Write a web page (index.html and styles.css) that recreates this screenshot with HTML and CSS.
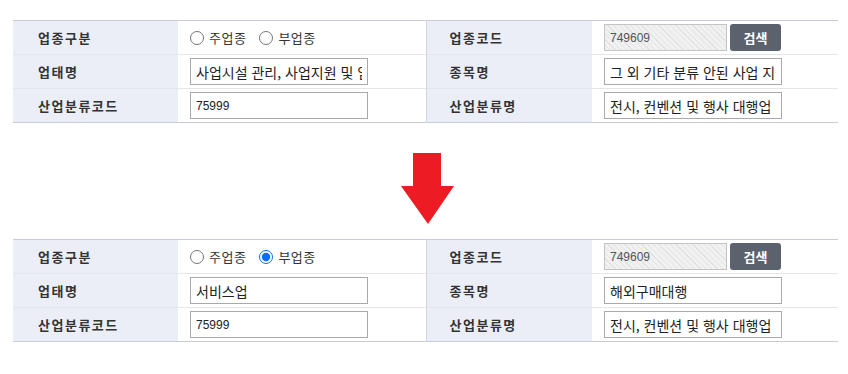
FILE: index.html
```html
<!DOCTYPE html>
<html lang="ko">
<head>
    <meta charset="UTF-8">
    <title>업종 선택</title>
    <link rel="stylesheet" href="styles.css">
</head>
<body>
    <div class="wrap">
        <table class="form-table">
            <colgroup>
                <col class="c-th"><col class="c-td"><col class="c-th2"><col class="c-td2">
            </colgroup>
            <tr>
                <th>업종구분</th>
                <td>
                    <label class="radio"><input type="radio" name="type1"> 주업종</label>
                    <label class="radio"><input type="radio" name="type1"> 부업종</label>
                </td>
                <th class="th-right">업종코드</th>
                <td>
                    <input type="text" class="inp inp-code" value="749609" readonly>
                    <button type="button" class="btn-search">검색</button>
                </td>
            </tr>
            <tr>
                <th>업태명</th>
                <td><input type="text" class="inp" value="사업시설 관리, 사업지원 및 임대 서비스업"></td>
                <th class="th-right">종목명</th>
                <td><input type="text" class="inp" value="그 외 기타 분류 안된 사업 지원 서비스업"></td>
            </tr>
            <tr>
                <th>산업분류코드</th>
                <td><input type="text" class="inp inp-num" value="75999"></td>
                <th class="th-right">산업분류명</th>
                <td><input type="text" class="inp" value="전시, 컨벤션 및 행사 대행업"></td>
            </tr>
        </table>

        <div class="arrow">
            <svg width="54" height="72" viewBox="0 0 54 72">
                <path d="M12 0 H40 V33 H53 L27 71 L0 33 H12 Z" fill="#ed1c24"/>
            </svg>
        </div>

        <table class="form-table">
            <colgroup>
                <col class="c-th"><col class="c-td"><col class="c-th2"><col class="c-td2">
            </colgroup>
            <tr>
                <th>업종구분</th>
                <td>
                    <label class="radio"><input type="radio" name="type2"> 주업종</label>
                    <label class="radio"><input type="radio" name="type2" checked> 부업종</label>
                </td>
                <th class="th-right">업종코드</th>
                <td>
                    <input type="text" class="inp inp-code" value="749609" readonly>
                    <button type="button" class="btn-search">검색</button>
                </td>
            </tr>
            <tr>
                <th>업태명</th>
                <td><input type="text" class="inp" value="서비스업"></td>
                <th class="th-right">종목명</th>
                <td><input type="text" class="inp" value="해외구매대행"></td>
            </tr>
            <tr>
                <th>산업분류코드</th>
                <td><input type="text" class="inp inp-num" value="75999"></td>
                <th class="th-right">산업분류명</th>
                <td><input type="text" class="inp" value="전시, 컨벤션 및 행사 대행업"></td>
            </tr>
        </table>
    </div>
</body>
</html>
```

FILE: styles.css
```css
/* 기본 */
* {
    margin: 0;
    padding: 0;
    box-sizing: border-box;
}

body {
    background: #fff;
    font-family: "Noto Sans CJK KR", "Noto Sans", sans-serif;
    color: #333;
}

.wrap {
    padding: 20px 10px 0 13px;
}

/* 폼 테이블 */
.form-table {
    width: 825px;
    border-collapse: collapse;
    table-layout: fixed;
    border-top: 1px solid #c9ccd5;
    border-bottom: 1px solid #c9ccd5;
}

.c-th { width: 165px; }
.c-td { width: 248px; }
.c-th2 { width: 166px; }
.c-td2 { width: 246px; }

.form-table tr + tr th,
.form-table tr + tr td {
    border-top: 1px solid #e4e6ec;
}

.form-table th,
.form-table td {
    height: 34px;
    vertical-align: middle;
}

.form-table th {
    background: #eceef7;
    text-align: left;
    padding-left: 25px;
    font-size: 13px;
    font-weight: bold;
    letter-spacing: 1.5px;
    color: #333;
}

.form-table th.th-right {
    border-left: 1px solid #d3d6de;
    padding-left: 23px;
}

.form-table td {
    padding-left: 12px;
    font-size: 0;
}

/* 라디오 */
.radio {
    display: inline-flex;
    align-items: center;
    font-size: 13px;
    color: #333;
    margin-right: 13px;
    letter-spacing: 0.5px;
}

.radio input {
    width: 14px;
    height: 14px;
    margin: 0 5px 0 0;
    accent-color: #0b6ef5;
}

/* 입력 */
.inp {
    width: 178px;
    height: 27px;
    border: 1px solid #a9a9a9;
    padding: 0 5px;
    font-family: "Noto Sans CJK KR", "Noto Sans", sans-serif;
    font-size: 14px;
    color: #222;
    background: #fff;
    vertical-align: middle;
}

.inp-num {
    font-family: "Liberation Sans", sans-serif;
    font-size: 12px;
}

.inp-code {
    width: 123px;
    height: 27px;
    font-family: "Liberation Sans", sans-serif;
    font-size: 12px;
    color: #555;
    border-color: #c4c4c4;
    background: repeating-linear-gradient(45deg, #f1f1f1 0, #f1f1f1 3px, #e2e2e2 3px, #e2e2e2 4px);
}

.btn-search {
    width: 51px;
    height: 27px;
    margin-left: 3px;
    border: 0;
    border-radius: 3px;
    background: #5b626e;
    color: #fff;
    font-family: "Noto Sans CJK KR", sans-serif;
    font-size: 13px;
    font-weight: bold;
    vertical-align: middle;
}

/* 화살표 */
.arrow {
    width: 825px;
    padding: 30px 0 14px;
    display: flex;
    justify-content: center;
    line-height: 0;
}

.arrow svg {
    margin-left: 5px;
}
```
